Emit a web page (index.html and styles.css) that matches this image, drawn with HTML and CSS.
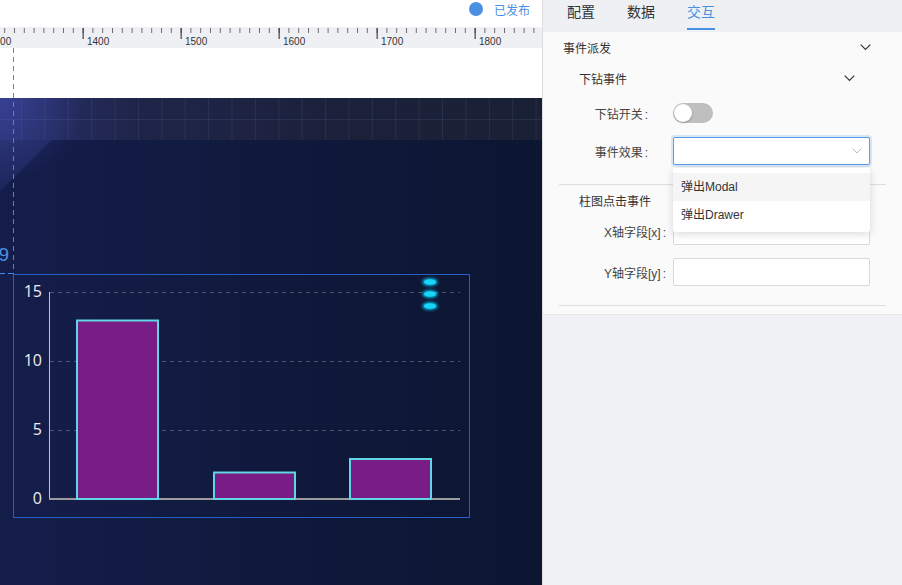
FILE: index.html
```html
<!DOCTYPE html>
<html lang="zh">
<head>
<meta charset="utf-8">
<title>大屏编辑器</title>
<link rel="stylesheet" href="styles.css">
</head>
<body>
<div class="app">
  <div class="stage">
    <div class="topbar">
      <div class="status"><span class="dot"></span><span>已发布</span></div>
    </div>
    <div class="ruler">
      <svg width="542" height="21" viewBox="0 0 542 21">
        <defs>
          <pattern id="tk" x="4.2" y="0" width="9.8" height="21" patternUnits="userSpaceOnUse">
            <rect x="0" y="1" width="1" height="5" fill="#6b6b6b"/>
          </pattern>
        </defs>
        <rect width="542" height="21" fill="url(#tk)"/>
        <g fill="#333">
          <rect x="82.6" y="1" width="1.1" height="11"/>
          <rect x="180.6" y="1" width="1.1" height="11"/>
          <rect x="278.6" y="1" width="1.1" height="11"/>
          <rect x="376.6" y="1" width="1.1" height="11"/>
          <rect x="474.6" y="1" width="1.1" height="11"/>
        </g>
        <g class="ruler-num">
          <text x="-11" y="18">1300</text>
          <text x="87" y="18">1400</text>
          <text x="185" y="18">1500</text>
          <text x="283" y="18">1600</text>
          <text x="381" y="18">1700</text>
          <text x="479" y="18">1800</text>
        </g>
      </svg>
    </div>
    <div class="blank"></div>
    <div class="canvas">
      <span class="guide-label">9</span>
      <div class="guide-h"></div>
      <div class="chart-box">
        <svg width="455" height="242" viewBox="0 0 455 242">
          <defs>
            <filter id="glow" x="-50%" y="-100%" width="200%" height="300%">
              <feGaussianBlur stdDeviation="1.6"/>
            </filter>
          </defs>
          <g stroke="rgba(255,255,255,0.26)" stroke-width="1" stroke-dasharray="4 4">
            <line x1="36" y1="17.5" x2="446" y2="17.5"/>
            <line x1="36" y1="86.5" x2="446" y2="86.5"/>
            <line x1="36" y1="155.5" x2="446" y2="155.5"/>
          </g>
          <line x1="35.5" y1="17" x2="35.5" y2="225" stroke="#c4c4c4" stroke-width="1"/>
          <line x1="35" y1="224" x2="446" y2="224" stroke="#9c9c9c" stroke-width="2"/>
          <g fill="#7a1c86" stroke="#5fd6e4" stroke-width="2">
            <rect x="63" y="45.5" width="81" height="178.5"/>
            <rect x="200" y="197.5" width="81" height="26.5"/>
            <rect x="336" y="184" width="81" height="40"/>
          </g>
          <g class="axis-num" text-anchor="end">
            <text x="28" y="22">15</text>
            <text x="28" y="91">10</text>
            <text x="28" y="160">5</text>
            <text x="28" y="229">0</text>
          </g>
          <g fill="#00c6f0" filter="url(#glow)">
            <ellipse cx="416" cy="7" rx="7.5" ry="3.8"/>
            <ellipse cx="416" cy="19" rx="7.5" ry="3.8"/>
            <ellipse cx="416" cy="31" rx="7.5" ry="3.8"/>
          </g>
          <g fill="#19d4f7">
            <ellipse cx="416" cy="7" rx="6" ry="2.8"/>
            <ellipse cx="416" cy="19" rx="6" ry="2.8"/>
            <ellipse cx="416" cy="31" rx="6" ry="2.8"/>
          </g>
        </svg>
      </div>
    </div>
    <div class="guide-v"></div>
  </div>

  <aside class="panel">
    <nav class="tabs">
      <span class="tab">配置</span>
      <span class="tab">数据</span>
      <span class="tab active">交互</span>
    </nav>
    <div class="panel-body">
      <div class="sec-head">
        <span>事件派发</span>
        <svg class="chev" width="11" height="7" viewBox="0 0 11 7"><path d="M0.7 0.7 L5.5 5.5 L10.3 0.7"/></svg>
      </div>
      <div class="sec-body">
        <div class="sub">
          <div class="sec-head">
            <span>下钻事件</span>
            <svg class="chev" width="11" height="7" viewBox="0 0 11 7"><path d="M0.7 0.7 L5.5 5.5 L10.3 0.7"/></svg>
          </div>
          <div class="sub-body">
            <div class="row row-toggle">
              <label class="lbl lbl-a">下钻开关<span class="colon">:</span></label>
              <span class="switch"><span class="knob"></span></span>
            </div>
            <div class="row row-select">
              <label class="lbl lbl-a">事件效果<span class="colon">:</span></label>
              <div class="select">
                <svg class="chev-light" width="10" height="6" viewBox="0 0 10 6"><path d="M0.5 0.5 L5 5 L9.5 0.5"/></svg>
                <ul class="dropdown">
                  <li class="opt hover">弹出Modal</li>
                  <li class="opt">弹出Drawer</li>
                </ul>
              </div>
            </div>
          </div>
        </div>
        <div class="sub">
          <div class="sec-head">
            <span>柱图点击事件</span>
            <svg class="chev" width="11" height="7" viewBox="0 0 11 7"><path d="M0.7 0.7 L5.5 5.5 L10.3 0.7"/></svg>
          </div>
          <div class="sub-body">
            <div class="row row-x">
              <label class="lbl lbl-b">X轴字段[x]<span class="colon">:</span></label>
              <div class="input"></div>
            </div>
            <div class="row row-y">
              <label class="lbl lbl-b">Y轴字段[y]<span class="colon">:</span></label>
              <div class="input"></div>
            </div>
          </div>
        </div>
      </div>
    </div>
  </aside>
</div>
</body>
</html>
```

FILE: styles.css
```css
* { box-sizing: border-box; }

html, body {
  margin: 0;
  padding: 0;
}

body {
  width: 902px;
  height: 585px;
  overflow: hidden;
  font-family: "Liberation Sans", "Noto Sans CJK SC", sans-serif;
  color: #333;
  background: #fff;
}

.app {
  display: flex;
  height: 585px;
}

/* ---------- left stage ---------- */
.stage {
  position: relative;
  width: 542px;
  flex: none;
  display: flex;
  flex-direction: column;
  background: #fff;
}

.topbar {
  height: 27px;
  display: flex;
  justify-content: flex-end;
  align-items: flex-start;
  padding: 2px 12px 0 0;
}

.status {
  display: flex;
  align-items: center;
  gap: 11px;
  height: 14px;
  font-size: 12px;
  color: #4a90e2;
}

.dot {
  width: 14px;
  height: 14px;
  border-radius: 50%;
  background: #4a90e2;
}

.ruler {
  height: 21px;
  background: #eff0f4;
}

.ruler svg { display: block; }

.ruler-num text {
  font-family: "Liberation Sans", sans-serif;
  font-size: 10px;
  fill: #333;
}

.blank {
  height: 50px;
  flex: none;
}

.canvas {
  flex: 1;
  position: relative;
  overflow: hidden;
  background:
    radial-gradient(circle at 0 0, rgba(78, 90, 200, 0.4), rgba(78, 90, 200, 0) 85px),
    linear-gradient(90deg, rgba(130, 150, 230, 0.12) 1px, transparent 1px) 21px 0 / 23.4px 42px repeat-x,
    linear-gradient(rgba(130, 150, 230, 0.12) 1px, transparent 1px) 0 21px / 100% 22px no-repeat,
    linear-gradient(90deg, #283070 0%, #1f2549 25%, #1b2139 65%, #1a2034 100%) 0 0 / 100% 42px no-repeat,
    linear-gradient(135deg, #232b66 0, #1e275c 66px, transparent 66px),
    linear-gradient(90deg, #151d4b 0%, #111a3f 40%, #0c1531 100%);
}

.guide-v {
  position: absolute;
  left: 13px;
  top: 48px;
  width: 1px;
  height: 226px;
  background: repeating-linear-gradient(to bottom, #3f8ae6 0 5px, transparent 5px 9px);
}

.guide-h {
  position: absolute;
  left: 0;
  top: 175px;
  width: 13px;
  height: 1px;
  background: repeating-linear-gradient(to right, #3f8ae6 0 5px, transparent 5px 8px);
}

.guide-label {
  position: absolute;
  right: 533px;
  top: 146px;
  font-size: 19px;
  line-height: 22px;
  color: #4a90e2;
}

.chart-box {
  position: absolute;
  left: 13px;
  top: 176px;
  width: 457px;
  height: 244px;
  border: 1px solid #2660c2;
}

.chart-box svg { display: block; }

.axis-num text {
  font-family: "Open Sans", "Liberation Sans", sans-serif;
  font-size: 16px;
  fill: #ececec;
}

/* ---------- right panel ---------- */
.panel {
  flex: 1;
  border-left: 1px solid #dcdcdc;
  background: #f0f1f5;
  display: flex;
  flex-direction: column;
}

.tabs {
  height: 32px;
  flex: none;
  display: flex;
  align-items: flex-start;
  gap: 32px;
  padding-left: 24px;
  background: #eff0f4;
}

.tab {
  height: 30px;
  line-height: 24px;
  font-size: 14px;
  color: #333;
  border-bottom: 2px solid transparent;
}

.tab.active {
  color: #4a90e2;
  border-bottom-color: #4a90e2;
}

.panel-body {
  background: #fafafa;
  padding-bottom: 8px;
  border-bottom: 1px solid #e6e6e6;
}

.sec-head {
  height: 31px;
  display: flex;
  align-items: center;
  justify-content: space-between;
  padding: 0 31px 0 20px;
  font-size: 12px;
  color: #333;
}

.chev path {
  fill: none;
  stroke: #333;
  stroke-width: 1.2;
}

.sec-body {
  margin: 0 16px;
}

.sub {
  border-bottom: 1px solid #dedede;
}

.sub-body {
  padding-bottom: 19px;
}

.row {
  display: flex;
  align-items: center;
  height: 28px;
}

.row-toggle { margin-top: 5px; }
.row-select { margin-top: 10px; }
.row-x { margin-top: 1px; }
.row-y { margin-top: 13px; }

.lbl {
  width: 114px;
  flex: none;
  text-align: right;
  font-size: 12px;
  color: #444;
}

.lbl-a { padding-right: 25px; }
.lbl-b { padding-right: 7px; }

.colon { margin-left: 2px; }

.switch {
  position: relative;
  width: 40px;
  height: 20px;
  border-radius: 10px;
  background: #bfbfbf;
}

.knob {
  position: absolute;
  left: 1px;
  top: 1px;
  width: 18px;
  height: 18px;
  border-radius: 50%;
  background: #fff;
  box-shadow: 0 1px 2px rgba(0, 0, 0, 0.25);
}

.select {
  position: relative;
  width: 197px;
  height: 28px;
  background: #fff;
  border: 1px solid #5b9ded;
  border-radius: 2px;
  box-shadow: 0 0 0 2px rgba(74, 144, 226, 0.2);
  display: flex;
  align-items: center;
  justify-content: flex-end;
  padding-right: 7px;
}

.chev-light path {
  fill: none;
  stroke: #bdbdbd;
  stroke-width: 1;
}

.dropdown {
  position: absolute;
  left: -1px;
  top: calc(100% + 4px);
  width: 197px;
  margin: 0;
  padding: 5px 0 3px;
  list-style: none;
  background: #fff;
  border-radius: 2px;
  box-shadow: 0 2px 8px rgba(0, 0, 0, 0.15);
  z-index: 10;
}

.opt {
  height: 28px;
  line-height: 28px;
  padding: 0 8px;
  font-size: 12px;
  color: #333;
}

.opt.hover { background: #f5f5f5; }

.input {
  width: 197px;
  height: 28px;
  background: #fff;
  border: 1px solid #d9d9d9;
  border-radius: 2px;
}
```
